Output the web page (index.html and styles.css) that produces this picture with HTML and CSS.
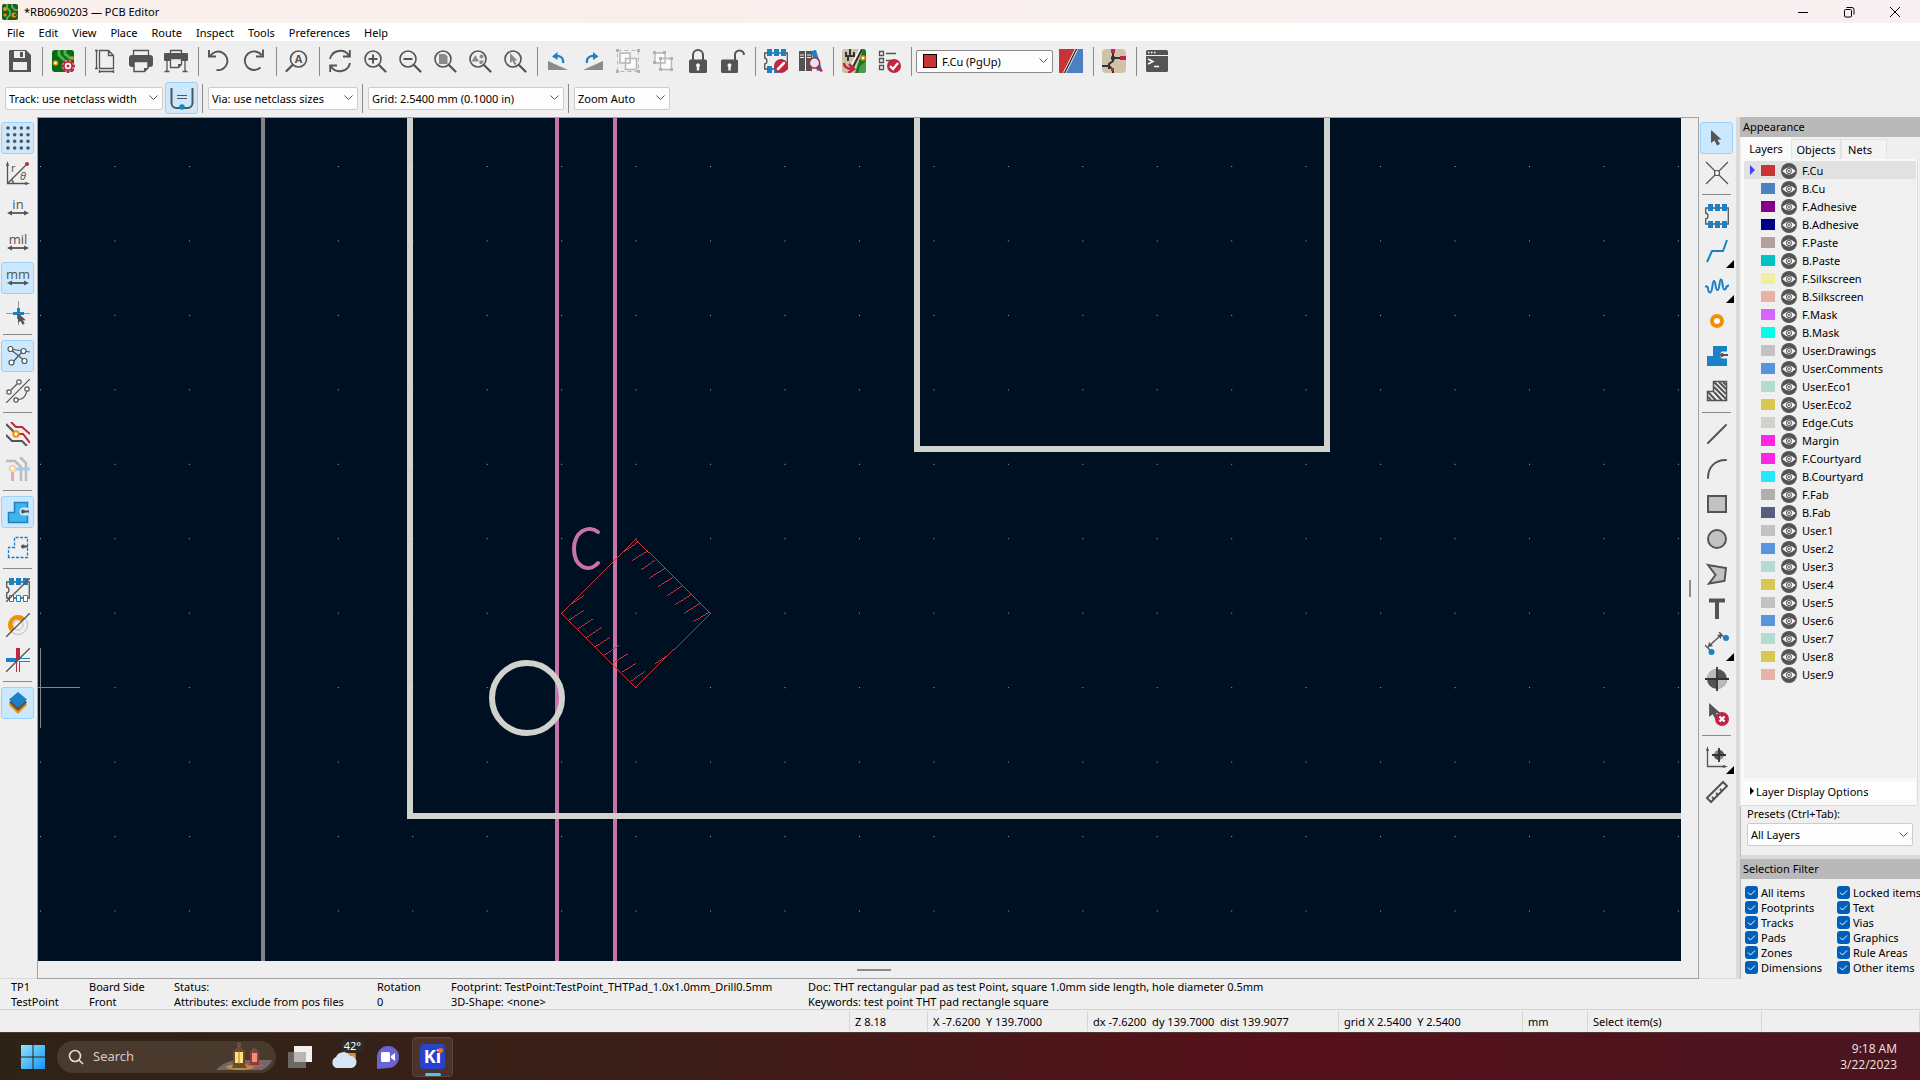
FILE: index.html
```html
<!DOCTYPE html>
<html lang="en">
<head>
<meta charset="utf-8">
<title>*RB0690203 — PCB Editor</title>
<link rel="stylesheet" href="styles.css">
</head>
<body>
<svg class="defs" aria-hidden="true">
  <symbol id="eye" viewBox="0 0 16 16"><circle cx="8" cy="8" r="8" fill="#545454"/><path d="M1.300 8Q8 .8 14.700 8Q8 15.200 1.300 8Z" fill="#f5f5f5"/><circle cx="8" cy="8" r="2.900" fill="#545454"/><circle cx="8" cy="8" r="2" fill="#f5f5f5"/><circle cx="8" cy="8" r="1" fill="#545454"/></symbol>
  <symbol id="lens" viewBox="0 0 24 24"><circle cx="10" cy="10" r="8" fill="none" stroke="#545454" stroke-width="1.600"/><path d="M16 16l6.500 6.500" stroke="#545454" stroke-width="2.200" stroke-linecap="round"/></symbol>
  <symbol id="arrow" viewBox="0 0 12 16"><path d="M0 0v13l3.500-2.500 2.500 5 3-1.500-2.500-4.500h4z" fill="#545454"/></symbol>
  <symbol id="chip" viewBox="0 0 24 24"><path d="M.7 4h22.600v16H.7v-5c3-.5 3-5.500 0-6z" fill="none" stroke="#545454" stroke-width="1.300"/></symbol>
  <symbol id="dim" viewBox="0 0 24 24"><path d="M4 20h16" stroke="#545454" stroke-width="1.800"/><path d="M1 20l5-2.500v5zM23 20l-5-2.500v5z" fill="#545454"/></symbol>
</svg>

<header class="titlebar">
  <svg class="app-icon" viewBox="0 0 16 16"><rect width="16" height="16" rx="2" fill="#1b5e20"/><path d="M5 0v4l3 3v4l-3 3v2M10 0v3l3 3h3" stroke="#4caf50" stroke-width="2" fill="none"/><circle cx="3" cy="5" r="2" fill="#f29100"/><circle cx="3" cy="11" r="1.500" fill="#f29100"/><circle cx="12" cy="11" r="2.500" fill="#f29100"/><circle cx="13" cy="11" r="1" fill="#1b3320"/></svg>
  <h1 class="title">*RB0690203 — PCB Editor</h1>
  <button class="win-btn" aria-label="Minimize"><svg viewBox="0 0 12 12"><path d="M1 6.500h10" stroke="#000"/></svg></button>
  <button class="win-btn" aria-label="Restore"><svg viewBox="0 0 12 12" fill="none" stroke="#000"><rect x="1.500" y="3.500" width="7" height="7.500" rx="1"/><path d="M3.500 1.500h5.500a2 2 0 0 1 2 2v5"/></svg></button>
  <button class="win-btn" aria-label="Close"><svg viewBox="0 0 12 12"><path d="M1 1l10 10M11 1L1 11" stroke="#000"/></svg></button>
</header>

<nav class="menubar">
  <button>File</button><button>Edit</button><button>View</button><button>Place</button><button>Route</button><button>Inspect</button><button>Tools</button><button>Preferences</button><button>Help</button>
</nav>

<div class="toolbar main-tools">
  <button class="tool" aria-label="Save"><svg viewBox="0 0 24 24"><path d="M2 1h16l5 5v17H1V2z" fill="#545454"/><path d="M6 2h11v7H6zM5 13h14v8H5z" fill="#efefef"/><path d="M12 3h3v5h-3z" fill="#545454"/></svg></button>
  <i class="sep"></i>
  <button class="tool" aria-label="Board setup"><svg viewBox="0 0 24 24"><rect x="1" y="1" width="22" height="22" rx="3" fill="#0a6b12"/><path d="M8 1v5l6 6v4M14 1v4l5 4h4" stroke="#4caf50" stroke-width="3" fill="none"/><circle cx="4.500" cy="14" r="2" fill="#fff" stroke="#f29100" stroke-width="1.500"/><circle cx="21" cy="9" r="1.600" fill="#f29100"/><circle cx="17" cy="17" r="5.500" fill="#bf2641" stroke="#fff" stroke-width=".8"/><path d="M17 10v14M10 17h14M12.200 12.200l9.600 9.600M21.800 12.200l-9.600 9.600" stroke="#bf2641" stroke-width="2.400"/><circle cx="17" cy="17" r="3.200" fill="#fff"/><circle cx="17" cy="17" r="1.500" fill="#bf2641"/></svg></button>
  <i class="sep"></i>
  <button class="tool" aria-label="Page settings"><svg viewBox="0 0 24 24" fill="none" stroke="#545454" stroke-width="1.300"><path d="M5.500 1.500h9l5 5v13h-14zM14.500 1.500v5h5M2.500 1.500v18M1 1.500h3M1 19.500h3M5.500 22.500h14M5.500 21v3M19.500 21v3"/></svg></button>
  <button class="tool" aria-label="Print"><svg viewBox="0 0 24 24"><path d="M4.500 6V1.500h15V6" fill="none" stroke="#545454" stroke-width="1.300"/><rect y="6" width="24" height="12" rx="3" fill="#545454"/><path d="M5 12.500h14V19l-3.500 3.500H5z" fill="#efefef" stroke="#545454" stroke-width="1.500"/><path d="M15 22.500V19h4z" fill="#545454"/></svg></button>
  <button class="tool" aria-label="Plot"><svg viewBox="0 0 24 24"><path d="M6.500 4V1.500h11V4M3 12v10M21 12v10M.5 22.500h5M18.500 22.500h5" fill="none" stroke="#545454" stroke-width="1.300"/><rect y="4" width="24" height="8" rx="1" fill="#545454"/><path d="M6.500 9.500h11v6l-3 3h-8z" fill="#efefef" stroke="#545454" stroke-width="1.300"/><path d="M14 18.500V15h4z" fill="#545454"/></svg></button>
  <i class="sep"></i>
  <button class="tool" aria-label="Undo"><svg viewBox="0 0 24 24" fill="none" stroke="#545454" stroke-width="1.900"><path d="M3.500 6.500A9.300 9.300 0 1 1 9.500 21M2 1v6.500h7"/></svg></button>
  <button class="tool" aria-label="Redo"><svg viewBox="0 0 24 24" fill="none" stroke="#545454" stroke-width="1.900"><path d="M19.500 6A9.300 9.300 0 1 0 18.500 18.500M21 .5v7h-7"/></svg></button>
  <i class="sep"></i>
  <button class="tool" aria-label="Find"><svg viewBox="0 0 24 24"><circle cx="13.500" cy="10" r="8" fill="none" stroke="#545454" stroke-width="1.600"/><path d="M7.500 16L1.500 22" stroke="#545454" stroke-width="2.200" stroke-linecap="round"/><text x="13.500" y="14" text-anchor="middle" class="glyph bold g11">A</text></svg></button>
  <i class="sep"></i>
  <button class="tool" aria-label="Refresh"><svg viewBox="0 0 24 24" fill="none" stroke="#545454" stroke-width="1.900"><path d="M2 10a10.500 10.500 0 0 1 19-3.500M21.800 1v6.500H15M22 14a10.500 10.500 0 0 1-19 3.500M2.200 23v-6.500H9"/></svg></button>
  <button class="tool" aria-label="Zoom in"><svg viewBox="0 0 24 24"><use href="#lens"/><path d="M10 5.500v9M5.500 10h9" stroke="#545454" stroke-width="2"/></svg></button>
  <button class="tool" aria-label="Zoom out"><svg viewBox="0 0 24 24"><use href="#lens"/><path d="M5.500 10h9" stroke="#545454" stroke-width="2"/></svg></button>
  <button class="tool" aria-label="Zoom to fit"><svg viewBox="0 0 24 24"><use href="#lens"/><path d="M6 5h6l2.500 2.500V15H6z" fill="#8b8b8b"/></svg></button>
  <button class="tool" aria-label="Zoom to objects"><svg viewBox="0 0 24 24"><use href="#lens"/><path d="M3.500 12.500L7.500 6l3.500 6.500z" fill="#8b8b8b"/><circle cx="13.500" cy="7.500" r="2" fill="#8b8b8b"/><path d="M11.500 11.500h4.500l-2 3.500h-2.500z" fill="#8b8b8b"/></svg></button>
  <button class="tool" aria-label="Zoom to selection"><svg viewBox="0 0 24 24"><use href="#lens"/><path d="M7 4v10l2.500-2 2 4 2-1-2-3.500h3z" fill="#8b8b8b"/></svg></button>
  <i class="sep"></i>
  <button class="tool" aria-label="Rotate counterclockwise"><svg viewBox="0 0 24 24"><path d="M2 12v9h20z" fill="#8b8b8b"/><path d="M17 14c1-5-3-8-8-7" fill="none" stroke="#1a81c4" stroke-width="2.200"/><path d="M6 7.500L11.500 3v8z" fill="#1a81c4"/></svg></button>
  <button class="tool" aria-label="Rotate clockwise"><svg viewBox="0 0 24 24"><path d="M22 12v9H2z" fill="#8b8b8b"/><path d="M6 14c-1-5 3-8 8-7" fill="none" stroke="#1a81c4" stroke-width="2.200"/><path d="M17.500 7.500L12 3v8z" fill="#1a81c4"/></svg></button>
  <button class="tool" aria-label="Group" disabled><svg viewBox="0 0 24 24"><rect x="1.500" y="1.500" width="21" height="21" fill="none" stroke="#b5b5b5" stroke-dasharray="4 3"/><path d="M0 0h3v3H0zM21 0h3v3h-3zM0 21h3v3H0zM21 21h3v3h-3z" fill="#b0b0b0"/><path d="M4 4h10v10H4zM9.500 9.500h11v11h-11z" fill="#fafafa" stroke="#b5b5b5" stroke-width="1.500"/></svg></button>
  <button class="tool" aria-label="Ungroup" disabled><svg viewBox="0 0 24 24"><path d="M4 4h10v10H4zM9.500 9.500h11v11h-11z" fill="#fafafa" stroke="#b5b5b5" stroke-width="1.300"/><path d="M2 2h3v3H2zM12 2h3v3h-3zM2 12h3v3H2zM8 8h3v3H8zM19 8h3v3h-3zM8 19h3v3H8zM19 19h3v3h-3z" fill="#b0b0b0"/></svg></button>
  <button class="tool" aria-label="Lock"><svg viewBox="0 0 24 24"><path d="M7 11V6a5 5 0 0 1 10 0v5" fill="none" stroke="#545454" stroke-width="2"/><rect x="3" y="10.500" width="18" height="13.500" rx="1.500" fill="#545454"/><path d="M10.800 18a2 2 0 1 1 2.400 0v3.500h-2.400z" fill="#f5f5f5"/></svg></button>
  <button class="tool" aria-label="Unlock"><svg viewBox="0 0 24 24"><path d="M14 11V6a4.500 4.500 0 0 1 9 0" fill="none" stroke="#545454" stroke-width="2"/><rect y="10.500" width="17" height="13.500" rx="1.500" fill="#545454"/><path d="M7.300 18a2 2 0 1 1 2.400 0v3.500H7.300z" fill="#f5f5f5"/></svg></button>
  <i class="sep"></i>
  <button class="tool" aria-label="Footprint editor"><svg viewBox="0 0 24 24"><use href="#chip"/><path d="M3 0h5v7H3zM10 0h5v7h-5zM17 0h5v7h-5zM3 17h5v7H3zM10 17h5v7h-5z" fill="#1a81c4"/><circle cx="17" cy="17" r="7" fill="#bf2641"/><path d="M14 20l6-6" stroke="#fff" stroke-width="2.500" stroke-linecap="round"/></svg></button>
  <button class="tool" aria-label="Footprint libraries"><svg viewBox="0 0 24 24"><path d="M0 2h6v20H0zM7 2h6v20H7z" fill="#545454"/><path d="M1 6h4M1 8.500h4M8 6h4M8 8.500h4" stroke="#efefef"/><path d="M12 2l5-1 6 20-5 1z" fill="#1a81c4"/><circle cx="15.500" cy="14" r="5.200" fill="#dde8f0" stroke="#bf2641" stroke-width="1.600"/><path d="M19 18l4 4.500" stroke="#bf2641" stroke-width="2.500"/></svg></button>
  <i class="sep"></i>
  <button class="tool" aria-label="Update from schematic"><svg viewBox="0 0 24 24"><rect width="24" height="24" rx="3" fill="#cfc2a8"/><path d="M21 0l-8 24h8a3 3 0 0 0 3-3V3a3 3 0 0 0-3-3z" fill="#0f7a1c"/><path d="M24 12l-6 5-2 7h5a3 3 0 0 0 3-3z" fill="#4c9a4c"/><path d="M8 0v8M4 3v4h8V3M6 8v4M20 0l-9 18" stroke="#333" stroke-width="2" fill="none"/><path d="M18 0l-9 17" stroke="#fff" stroke-width="1.500"/><circle cx="21" cy="9" r="2" fill="#fff" stroke="#f29100" stroke-width="1.500"/><path d="M2 14c0 5 5 6 9 6M7 15l5 5-6 4" fill="none" stroke="#bf2641" stroke-width="2.500"/></svg></button>
  <button class="tool" aria-label="Design rules check"><svg viewBox="0 0 24 24"><path d="M2.500 2.500h4v4h-4zM2.500 9.500h4v4h-4zM2.500 16.500h4v4h-4zM9 4.500h10M9 11.500h5" fill="none" stroke="#545454" stroke-width="1.300"/><circle cx="17" cy="17" r="7" fill="#bf2641"/><path d="M13 17l3 3 5-6" fill="none" stroke="#fff" stroke-width="2.200"/></svg></button>
  <i class="sep"></i>
  <div class="combo layer-combo"><i class="swatch"></i><select aria-label="Active layer"><option>F.Cu (PgUp)</option></select></div>
  <button class="tool" aria-label="Layer pair"><svg viewBox="0 0 24 24"><path d="M0 0h18L6 24H0z" fill="#c83434"/><path d="M18 0h6v24H6z" fill="#4d7fc4"/><path d="M17.500 0l-12 24" stroke="#fff" stroke-width="3"/><path d="M17.500 0l-12 24" stroke="#333" stroke-width="1.500"/></svg></button>
  <i class="sep"></i>
  <button class="tool" aria-label="Schematic editor"><svg viewBox="0 0 24 24"><rect width="24" height="24" rx="4" fill="#cfc2a8"/><path d="M11 4v8l-4 3v5M11 9h8M0 17h7M7 17l4 4v3" fill="none" stroke="#333" stroke-width="2"/><circle cx="11" cy="9" r="2.200" fill="#333"/><path d="M9 0h4v4H9zM18 7h6v4h-6zM9 19h3v3H9z" fill="#bf2641"/></svg></button>
  <i class="sep"></i>
  <button class="tool" aria-label="Scripting console"><svg viewBox="0 0 24 24"><rect x="1" y="1" width="22" height="22" rx="1.500" fill="#545454"/><path d="M1 6.500h22" stroke="#efefef"/><path d="M3 3.500h1.500M6 3.500h1.500M9 3.500h1.500" stroke="#fff" stroke-width="1.500"/><path d="M3 10l5 2.500L3 15M9 17.500h5" stroke="#fff" stroke-width="1.400" fill="none"/></svg></button>
</div>

<div class="toolbar option-tools">
  <div class="combo track-combo"><select aria-label="Track width"><option>Track: use netclass width</option></select></div>
  <button class="tool on auto-track" aria-label="Automatic track width"><svg viewBox="0 0 24 24"><path d="M1.500 2v15a5 5 0 0 0 5 5h11a5 5 0 0 0 5-5V2" fill="none" stroke="#545454" stroke-width="2"/><path d="M7 9.500h10M7 12.500h10" stroke="#545454" stroke-width="1.200"/><circle cx="12" cy="21" r="2.800" fill="#1a81c4"/></svg></button>
  <i class="sep"></i>
  <div class="combo via-combo"><select aria-label="Via size"><option>Via: use netclass sizes</option></select></div>
  <i class="sep"></i>
  <div class="combo grid-combo"><select aria-label="Grid"><option>Grid: 2.5400 mm (0.1000 in)</option></select></div>
  <i class="sep"></i>
  <div class="combo zoom-combo"><select aria-label="Zoom"><option>Zoom Auto</option></select></div>
</div>

<main class="workspace">
  <div class="side-tools">
    <button class="tool on" aria-label="Show grid"><svg viewBox="0 0 24 24"><path d="M2 2h20.500M2 8.700h20.500M2 15.300h20.500M2 22h20.500" stroke="#545454" stroke-width="3.600" stroke-linecap="round" stroke-dasharray="0 6.660"/></svg></button>
    <button class="tool" aria-label="Polar coordinates"><svg viewBox="0 0 24 24"><path d="M1.500 2v20.500H22M1.500 22.500L21 3M5 18a8 8 0 0 1 2.500 4" fill="none" stroke="#545454" stroke-width="1.300"/><path d="M1.500 0L0 5h3zM24 22.500L19 21v3z" fill="#545454"/><circle cx="21" cy="3" r="2" fill="#bf2641"/><text x="5" y="11" class="glyph g11">r</text><text x="14" y="19" class="glyph g11 italic">θ</text></svg></button>
    <button class="tool" aria-label="Inches"><svg viewBox="0 0 24 24"><text x="12" y="13" text-anchor="middle" class="glyph">in</text><use href="#dim" y="-3"/></svg></button>
    <button class="tool" aria-label="Mils"><svg viewBox="0 0 24 24"><text x="12" y="13" text-anchor="middle" class="glyph">mil</text><use href="#dim" y="-3"/></svg></button>
    <button class="tool on" aria-label="Millimeters"><svg viewBox="0 0 24 24"><text x="12" y="13" text-anchor="middle" class="glyph">mm</text><use href="#dim" y="-3"/></svg></button>
    <button class="tool" aria-label="Full crosshair"><svg viewBox="0 0 24 24"><path d="M12.500 0v24M0 12.500h24" stroke="#999"/><path d="M12.500 7v11M7 12.500h11" stroke="#1a81c4" stroke-width="3"/><use href="#arrow" x="12" y="12" width="9" height="12"/></svg></button>
    <i class="sep"></i>
    <button class="tool on" aria-label="Ratsnest"><svg viewBox="0 0 24 24" stroke="#545454" stroke-width="1.200"><path d="M4 5l15 12M4 5l20 3M17 7L6 19"/><g fill="#fff"><circle cx="4.500" cy="5" r="2.500"/><circle cx="17.500" cy="7" r="2.500"/><circle cx="5.500" cy="18.500" r="2.500"/><circle cx="18.500" cy="17" r="2.500"/></g></svg></button>
    <button class="tool" aria-label="Curved ratsnest"><svg viewBox="0 0 24 24" stroke="#545454" stroke-width="1.200" fill="none"><path d="M0 24L24 0M5 11l6-6M12 20.500c6 0 8-4 9-9"/><g fill="#fff"><circle cx="3" cy="13" r="2.200"/><circle cx="13" cy="3" r="2.200"/><circle cx="21" cy="10" r="2.200"/><circle cx="10" cy="21" r="2.200"/></g></svg></button>
    <i class="sep"></i>
    <button class="tool" aria-label="Inactive layers"><svg viewBox="0 0 24 24" fill="none" stroke-width="2"><path d="M0 2l10 10M0 13l6 6h10l5 5" stroke="#545454"/><path d="M5 0l5 5h6l8 7M10 12h7l7 9" stroke="#bf2641"/><circle cx="10" cy="12" r="2.700" fill="#fff" stroke="#f29100"/></svg></button>
    <button class="tool" aria-label="Net highlight"><svg viewBox="0 0 24 24" fill="none" stroke-width="2.500"><path d="M0 4h9l6 6v14M14 0l6 6v18" stroke="#bbb"/><path d="M7 12h17" stroke="#a3cde8" stroke-width="3"/><path d="M6.500 12v12" stroke="#e8a8b3" stroke-width="3"/><circle cx="6.500" cy="11.500" r="2.700" fill="#fff" stroke="#fad39a" stroke-width="2"/></svg></button>
    <i class="sep"></i>
    <button class="tool on" aria-label="Filled zones"><svg viewBox="0 0 24 24"><path d="M2.500 22.500v-10h6v-10h13v20z" fill="#3eb5ea" stroke="#1a81c4" stroke-width="1.500"/><path d="M22.500 7.500h-5a4 4 0 0 0 0 8h5z" fill="#cce8ff"/><path d="M17 11.500h6" stroke="#545454" stroke-width="2"/><circle cx="17" cy="11.500" r="2" fill="#545454"/></svg></button>
    <button class="tool" aria-label="Zone outlines"><svg viewBox="0 0 24 24"><path d="M2.500 22.500v-10h6v-10h13v20z" fill="none" stroke="#1a81c4" stroke-width="1.300" stroke-dasharray="3 1.500"/><path d="M17 11.500h5" stroke="#545454" stroke-width="2"/><circle cx="17" cy="11.500" r="2" fill="#545454"/></svg></button>
    <i class="sep"></i>
    <button class="tool" aria-label="Sketch pads"><svg viewBox="0 0 24 24"><use href="#chip"/><path d="M3 0h5v7H3zM10 0h5v7h-5zM17 0h5v7h-5z" fill="#1a81c4"/><path d="M3.500 17.500h4v6h-4zM10.500 17.500h4v6h-4zM17.500 17.500h4v6h-4z" fill="#fff" stroke="#1a81c4"/><path d="M0 24L24 0" stroke="#545454" stroke-width="1.300"/></svg></button>
    <button class="tool" aria-label="Sketch vias"><svg viewBox="0 0 24 24" fill="none"><circle cx="12" cy="12" r="9.500" stroke="#bbb"/><circle cx="12" cy="12" r="5" stroke="#bbb"/><path d="M5 19A9.900 9.900 0 1 1 19 5l-4 4a4.500 4.500 0 1 0-6 6z" fill="#f29100"/><path d="M0 24L24 0" stroke="#545454" stroke-width="1.300"/></svg></button>
    <button class="tool" aria-label="Sketch tracks"><svg viewBox="0 0 24 24" fill="none"><path d="M0 12h12" stroke="#1a81c4" stroke-width="4"/><path d="M13 10.500h11M13 13.500h11" stroke="#1a81c4"/><path d="M12 0v12" stroke="#bf2641" stroke-width="4"/><path d="M10.500 13v11M13.500 13v11" stroke="#bf2641"/><path d="M0 24L24 0" stroke="#545454" stroke-width="1.300"/></svg></button>
    <i class="sep"></i>
    <button class="tool on" aria-label="Appearance manager"><svg viewBox="0 0 24 24"><path d="M3 14l9-9 9 9-9 9z" fill="#f29100"/><path d="M3 11.500l9-9 9 9-9 8.500z" fill="#545454"/><path d="M3 8.500L12 1l9 7.500-9 8z" fill="#1a81c4"/></svg></button>
  </div>

  <div class="view">
    <svg class="board" role="img" aria-label="Board canvas">
      <defs><pattern id="dots" x="2" y="48" width="74.450" height="74.450" patternUnits="userSpaceOnUse"><rect width="1" height="1" fill="#a9aeb3"/></pattern></defs>
      <rect width="100%" height="100%" fill="#001023"/>
      <rect width="100%" height="100%" fill="url(#dots)"/>
      <path d="M225 0v2000" stroke="#848484" stroke-width="4"/>
      <path d="M519 0v2000M577 0v2000" stroke="#c872a9" stroke-width="4"/>
      <path class="thin" d="M2.500 530v80M0 569.500h42" stroke="#848484"/>
      <g fill="none" stroke="#d0d2cd" stroke-width="6">
        <path d="M372 0v701"/><line x1="369" y1="698" x2="100%" y2="698"/>
        <path d="M879 0v331h410V0"/>
        <circle cx="489" cy="580" r="35"/>
      </g>
      <path d="M560 414c-10-8-24 0-24 17s14 25 24 14" fill="none" stroke="#c872a9" stroke-width="4" stroke-linecap="round"/>
      <g class="thin" transform="translate(342 382) scale(.333333)" fill="none" stroke="#c83434" stroke-width="3">
        <path d="M767 118L992 340 767 562 544 340z"/>
        <path d="M730 156l44-30M757 182l46-30M784 209l42-29M808 235l46-30M835 260l46-30M862 287l46-31M886 314l48-31M913 340l48-31M940 365l46-27M568 316l44-30M565 362l46-31M592 388l46-31M619 413l46-31M645 441l46-30M672 466l46-30M699 489l44-27M725 517l43-27M752 544l43-30M826 491l42-28"/>
      </g>
    </svg>
    <div class="vscroll"><i></i></div>
    <div class="hscroll"><i></i></div>
  </div>

  <div class="side-tools">
    <button class="tool on" aria-label="Select"><svg viewBox="0 0 24 24"><use href="#arrow" x="6" y="4" width="12" height="16"/></svg></button>
    <button class="tool" aria-label="Local ratsnest"><svg viewBox="0 0 24 24" stroke="#545454" stroke-width="1.200"><path d="M1 1l22 22M23 1L1 23"/><circle cx="12" cy="12" r="2.500" fill="#fff"/></svg></button>
    <i class="sep"></i>
    <button class="tool" aria-label="Add footprint"><svg viewBox="0 0 24 24"><use href="#chip"/><path d="M3 0h5v7H3zM10 0h5v7h-5zM17 0h5v7h-5zM3 17h5v7H3zM10 17h5v7h-5zM17 17h5v7h-5z" fill="#1a81c4"/></svg></button>
    <button class="tool more" aria-label="Route tracks"><svg viewBox="0 0 24 24"><path d="M2 23l5-11h11l4-11" fill="none" stroke="#1a81c4" stroke-width="2"/></svg></button>
    <button class="tool more" aria-label="Tune length"><svg viewBox="0 0 24 24"><path d="M0 12.500h2c2 0 0 6 3 6s2-11.500 4-11.500 1 9 3.500 9S14 5.500 16 5.500s1 10 3.500 10 .5-4 4.500-4" fill="none" stroke="#1a81c4" stroke-width="2"/></svg></button>
    <button class="tool" aria-label="Add via"><svg viewBox="0 0 24 24"><circle cx="12" cy="12" r="5" fill="#fff" stroke="#f29100" stroke-width="4"/></svg></button>
    <button class="tool" aria-label="Add filled zone"><svg viewBox="0 0 24 24"><path d="M2 22V12h6V2h14v20z" fill="#1a81c4"/><path d="M22 7.500h-5a4 4 0 0 0 0 7h5z" fill="#efefef"/><path d="M17 11h6" stroke="#545454" stroke-width="2"/><circle cx="17" cy="11" r="2" fill="#545454"/></svg></button>
    <button class="tool" aria-label="Add rule area"><svg viewBox="0 0 24 24" fill="none" stroke="#545454"><path d="M2.500 21.500v-9h6v-10h13v19z" stroke-width="1.500"/><path d="M9 3l12 12M9 8l12.500 12.500M14 3l7.500 7.500M3 13l8 8.500M9 13l8 8.500M3 18l3 3M18 3l3 3" stroke-width="2"/></svg></button>
    <i class="sep"></i>
    <button class="tool" aria-label="Draw line"><svg viewBox="0 0 24 24"><path d="M3 21L21 3" stroke="#545454" stroke-width="2" stroke-linecap="round"/></svg></button>
    <button class="tool" aria-label="Draw arc"><svg viewBox="0 0 24 24"><path d="M3 21C3 10 10 3 21 3" fill="none" stroke="#545454" stroke-width="2" stroke-linecap="round"/></svg></button>
    <button class="tool" aria-label="Draw rectangle"><svg viewBox="0 0 24 24"><rect x="3" y="4" width="18" height="16" fill="#c2c2c2" stroke="#545454" stroke-width="2"/></svg></button>
    <button class="tool" aria-label="Draw circle"><svg viewBox="0 0 24 24"><circle cx="12" cy="12" r="9" fill="#c2c2c2" stroke="#545454" stroke-width="2"/></svg></button>
    <button class="tool" aria-label="Draw polygon"><svg viewBox="0 0 24 24"><path d="M3 3l18 3-1.500 13L4 21.500 10.500 13z" fill="#c2c2c2" stroke="#545454" stroke-width="2"/></svg></button>
    <button class="tool" aria-label="Add text"><svg viewBox="0 0 24 24"><path d="M4 3.500h16M12 3v19" stroke="#545454" stroke-width="4"/></svg></button>
    <button class="tool more" aria-label="Add dimension"><svg viewBox="0 0 24 24"><path d="M0 13l6 6M14 0l6 6M3 15L17 2" stroke="#545454" stroke-width="1.300"/><path d="M3 15l1-5 4 4zM17 2l-5 1 4 4z" fill="#545454"/><circle cx="6.500" cy="20" r="3" fill="#1a81c4"/><circle cx="21" cy="6" r="3" fill="#1a81c4"/></svg></button>
    <button class="tool" aria-label="Set origin"><svg viewBox="0 0 24 24"><circle cx="12" cy="12" r="10" fill="#545454"/><path d="M12 2A10 10 0 0 0 2 12h10zM12 22a10 10 0 0 0 10-10H12z" fill="#bbb"/><path d="M12 0v24M0 12h24" stroke="#333" stroke-width="1.800"/></svg></button>
    <button class="tool" aria-label="Delete"><svg viewBox="0 0 24 24"><use href="#arrow" x="4" y="1" width="13" height="17"/><circle cx="17" cy="17" r="7" fill="#bf2641"/><path d="M14.500 14.500l5 5M19.500 14.500l-5 5" stroke="#fff" stroke-width="2.300"/></svg></button>
    <i class="sep"></i>
    <button class="tool more" aria-label="Grid origin"><svg viewBox="0 0 24 24"><path d="M2.500 4v17.500H20" fill="none" stroke="#545454" stroke-width="1.300"/><path d="M2.500 1L1 6h3zM23 21.500L18 20v3z" fill="#545454"/><circle cx="14" cy="10" r="5" fill="#8b8b8b"/><path d="M14 5a5 5 0 0 1 5 5h-5zM14 15a5 5 0 0 1-5-5h5z" fill="#545454"/><path d="M14 3v14M7 10h14" stroke="#333" stroke-width="1.800"/></svg></button>
    <button class="tool" aria-label="Measure"><svg viewBox="0 0 24 24"><path d="M2 18L18 2l4 4L6 22z" fill="none" stroke="#545454" stroke-width="2"/><path d="M9 19l-2-2M13 15l-2-2M17 11l-2-2" stroke="#545454" stroke-width="1.800"/></svg></button>
  </div>

  <aside class="panel">
    <h2 class="panel-head">Appearance</h2>
    <div class="tabs" role="tablist"><button role="tab" class="tab active">Layers</button><button role="tab" class="tab">Objects</button><button role="tab" class="tab">Nets</button></div>
    <div class="page">
      <ul class="layers">
        <li class="current"><i style="background:#c83434"></i><svg><use href="#eye"/></svg><span>F.Cu</span></li>
        <li><i style="background:#4d7fc4"></i><svg><use href="#eye"/></svg><span>B.Cu</span></li>
        <li><i style="background:#840084"></i><svg><use href="#eye"/></svg><span>F.Adhesive</span></li>
        <li><i style="background:#000084"></i><svg><use href="#eye"/></svg><span>B.Adhesive</span></li>
        <li><i style="background:#b4a09a"></i><svg><use href="#eye"/></svg><span>F.Paste</span></li>
        <li><i style="background:#00c2c2"></i><svg><use href="#eye"/></svg><span>B.Paste</span></li>
        <li><i style="background:#f2eda1"></i><svg><use href="#eye"/></svg><span>F.Silkscreen</span></li>
        <li><i style="background:#e8b2a7"></i><svg><use href="#eye"/></svg><span>B.Silkscreen</span></li>
        <li><i style="background:#d864ff"></i><svg><use href="#eye"/></svg><span>F.Mask</span></li>
        <li><i style="background:#02ffee"></i><svg><use href="#eye"/></svg><span>B.Mask</span></li>
        <li><i style="background:#c2c2c2"></i><svg><use href="#eye"/></svg><span>User.Drawings</span></li>
        <li><i style="background:#5994dc"></i><svg><use href="#eye"/></svg><span>User.Comments</span></li>
        <li><i style="background:#b4dbd2"></i><svg><use href="#eye"/></svg><span>User.Eco1</span></li>
        <li><i style="background:#d8c852"></i><svg><use href="#eye"/></svg><span>User.Eco2</span></li>
        <li><i style="background:#d0d2cd"></i><svg><use href="#eye"/></svg><span>Edge.Cuts</span></li>
        <li><i style="background:#ff26e2"></i><svg><use href="#eye"/></svg><span>Margin</span></li>
        <li><i style="background:#ff26e2"></i><svg><use href="#eye"/></svg><span>F.Courtyard</span></li>
        <li><i style="background:#26e9ff"></i><svg><use href="#eye"/></svg><span>B.Courtyard</span></li>
        <li><i style="background:#afafaf"></i><svg><use href="#eye"/></svg><span>F.Fab</span></li>
        <li><i style="background:#585d84"></i><svg><use href="#eye"/></svg><span>B.Fab</span></li>
        <li><i style="background:#c2c2c2"></i><svg><use href="#eye"/></svg><span>User.1</span></li>
        <li><i style="background:#5994dc"></i><svg><use href="#eye"/></svg><span>User.2</span></li>
        <li><i style="background:#b4dbd2"></i><svg><use href="#eye"/></svg><span>User.3</span></li>
        <li><i style="background:#d8c852"></i><svg><use href="#eye"/></svg><span>User.4</span></li>
        <li><i style="background:#c2c2c2"></i><svg><use href="#eye"/></svg><span>User.5</span></li>
        <li><i style="background:#5994dc"></i><svg><use href="#eye"/></svg><span>User.6</span></li>
        <li><i style="background:#b4dbd2"></i><svg><use href="#eye"/></svg><span>User.7</span></li>
        <li><i style="background:#d8c852"></i><svg><use href="#eye"/></svg><span>User.8</span></li>
        <li><i style="background:#e8b2a7"></i><svg><use href="#eye"/></svg><span>User.9</span></li>
      </ul>
      <button class="expander">Layer Display Options</button>
    </div>
    <div class="presets">
      <label for="preset">Presets (Ctrl+Tab):</label>
      <div class="combo"><select id="preset"><option>All Layers</option></select></div>
    </div>
    <h2 class="panel-head">Selection Filter</h2>
    <div class="filters">
      <label><input type="checkbox" checked>All items</label><label><input type="checkbox" checked>Locked items</label>
      <label><input type="checkbox" checked>Footprints</label><label><input type="checkbox" checked>Text</label>
      <label><input type="checkbox" checked>Tracks</label><label><input type="checkbox" checked>Vias</label>
      <label><input type="checkbox" checked>Pads</label><label><input type="checkbox" checked>Graphics</label>
      <label><input type="checkbox" checked>Zones</label><label><input type="checkbox" checked>Rule Areas</label>
      <label><input type="checkbox" checked>Dimensions</label><label><input type="checkbox" checked>Other items</label>
    </div>
  </aside>
</main>

<section class="info">
  <div>TP1<br>TestPoint</div><div>Board Side<br>Front</div><div>Status:<br>Attributes: exclude from pos files</div><div>Rotation<br>0</div><div>Footprint: TestPoint:TestPoint_THTPad_1.0x1.0mm_Drill0.5mm<br>3D-Shape: &lt;none&gt;</div><div>Doc: THT rectangular pad as test Point, square 1.0mm side length, hole diameter 0.5mm<br>Keywords: test point THT pad rectangle square</div>
</section>

<footer class="status">
  <span></span><span>Z 8.18</span><span>X -7.6200&nbsp; Y 139.7000</span><span>dx -7.6200&nbsp; dy 139.7000&nbsp; dist 139.9077</span><span>grid X 2.5400&nbsp; Y 2.5400</span><span>mm</span><span>Select item(s)</span><span></span>
</footer>

<div class="taskbar">
  <button class="task start" aria-label="Start"><svg viewBox="0 0 24 24"><defs><linearGradient id="win" x1="0" y1="0" x2="24" y2="24" gradientUnits="userSpaceOnUse"><stop stop-color="#8fe4ff"/><stop offset="1" stop-color="#1594f5"/></linearGradient></defs><path d="M0 0h11.500v11.500H0zM12.500 0H24v11.500H12.500zM0 12.500h11.500V24H0zM12.500 12.500H24V24H12.500z" fill="url(#win)"/></svg></button>
  <div class="search">
    <svg viewBox="0 0 16 16" fill="none" stroke="#e4ddd8" stroke-width="1.600"><circle cx="7" cy="7" r="5.500"/><path d="M11 11l4 4"/></svg>
    <input type="search" aria-label="Search" placeholder="Search">
    <svg class="lanterns" viewBox="0 0 56 30"><path d="M0 28c8-8 16-10 24-10h32c-2 5-6 8-10 10z" fill="#75656c"/><ellipse cx="24" cy="25" rx="14" ry="3" fill="#d8a23a" opacity=".7"/><ellipse cx="38" cy="23" rx="9" ry="2" fill="#d85a4a" opacity=".7"/><path d="M17 9l6-6 6 6v14l2 3H16l1-3z" fill="#6b4a35"/><path d="M19 10h8v11h-8z" fill="#ffe27a"/><path d="M23 9v13" stroke="#b07a30"/><circle cx="23" cy="2.500" r="1.500" fill="none" stroke="#8a6a50"/><path d="M34 10l4-5 5 5v11l1 2H33l1-2z" fill="#7a463b"/><path d="M36 11h5v9h-5z" fill="#ff8a7a"/></svg>
  </div>
  <button class="task" aria-label="Task view"><svg viewBox="0 0 24 24"><rect x="6" y="1" width="18" height="16" fill="#f3f1ef"/><rect y="7" width="18" height="16" fill="#6e6862"/><rect x="6" y="7" width="12" height="10" fill="#b9b5b1"/></svg></button>
  <button class="task weather" aria-label="Weather"><svg viewBox="0 0 28 28"><circle cx="19" cy="13" r="7" fill="#e88a2a"/><path d="M6 25a6 6 0 0 1 0-11 8 8 0 0 1 14-1 6 6 0 0 1 1 12z" fill="#d6e6f8"/></svg><span class="badge">42°</span></button>
  <button class="task" aria-label="Chat"><svg viewBox="0 0 24 24"><path d="M1 24V12a11 11 0 1 1 11 11z" fill="#6a63d2"/><rect x="5" y="7" width="9" height="10" rx="1.500" fill="#fff"/><path d="M15 11l4-3v8l-4-3z" fill="#fff"/></svg></button>
  <button class="task running" aria-label="KiCad"><span class="ki">Ki</span></button>
  <div class="clock">9:18 AM<br>3/22/2023</div>
</div>
</body>
</html>
```
FILE: styles.css
```css
* { box-sizing: border-box; }
html, body { height: 100%; }
body {
  margin: 0;
  min-height: 100vh;
  display: flex;
  flex-direction: column;
  overflow: hidden;
  background: #efefef;
  color: #000;
  font: 11px/15px "Noto Sans", "Open Sans", sans-serif;
}
button, select, input { font: inherit; color: inherit; }
button { border: 0; padding: 0; background: none; }
h1, h2 { margin: 0; font-size: inherit; font-weight: normal; }
svg { display: block; flex: none; }
.defs { position: absolute; width: 0; height: 0; }

.titlebar { display: flex; align-items: center; height: 23px; padding: 0 2px; background: linear-gradient(90deg, #f9f0eb, #f8eff2); }
.app-icon { width: 16px; height: 16px; }
.title { flex: 1; padding-left: 6px; }
.win-btn { width: 46px; height: 22px; display: grid; place-items: center; }
.win-btn svg { width: 12px; height: 12px; }

.menubar { display: flex; gap: 14px; height: 18px; padding: 0 7px; background: #fff; }

.toolbar { display: flex; align-items: center; }
.main-tools { height: 40px; padding-left: 2px; }
.option-tools { height: 36px; padding: 0 0 2px 5px; }
.tool { position: relative; flex: none; display: grid; place-items: center; width: 35px; height: 35px; border-radius: 4px; }
.tool svg { width: 24px; height: 24px; }
.tool.on { width: 33px; height: 32px; background: #cce8ff; border: 1px solid #99d1ff; border-radius: 3px; }
.sep { flex: none; width: 1px; height: 29px; margin: 0 2px 0 5px; background: #8a8a8a; }
.glyph { font: 13px "Open Sans", sans-serif; fill: #545454; stroke: none; }
.glyph.bold { font-weight: bold; }
.glyph.italic { font-style: italic; }
.glyph.g11 { font-size: 11px; }

.combo { position: relative; display: flex; align-items: center; height: 23px; background: #fdfdfd; border: 1px solid #ccc; border-radius: 2px; }
.combo select {
  flex: 1; min-width: 0; height: 21px; padding: 0 20px 0 3px; border: 0; appearance: none;
  background: url("data:image/svg+xml,%3Csvg xmlns='http://www.w3.org/2000/svg' width='9' height='6'%3E%3Cpath d='M.5.5l4 4 4-4' fill='none' stroke='%23555'/%3E%3C/svg%3E") no-repeat right 4px center;
}
.layer-combo { width: 137px; margin-left: 2px; border-color: #8a8a8a; }
.swatch { width: 14px; height: 14px; margin: 0 2px 0 6px; background: #c83434; border: 1px solid #000; }
.track-combo { width: 158px; }
.toolbar .auto-track { margin: 0 0 0 2px; }
.auto-track + .sep { margin-left: 4px; }
.via-combo { width: 150px; margin: 0 -1px 0 3px; }
.grid-combo { width: 196px; margin: 0 -1px 0 3px; }
.zoom-combo { width: 96px; margin-left: 3px; }

.workspace { flex: 1; min-height: 0; display: grid; grid-template-columns: 37px minmax(0, 1fr) 37px 184px; }
.side-tools { display: flex; flex-direction: column; align-items: center; padding: 3px 2px 0 0; border-bottom: 1px solid #d8d8d8; }
.side-tools .tool.on { margin: 2px 0 1px; }
.side-tools .sep { width: 29px; height: 1px; margin: 4px 0 3px; }
.more::after { content: ""; position: absolute; right: 0; bottom: 0; border: 4px solid; border-color: transparent #000 #000 transparent; }

.view { display: grid; grid-template: minmax(0, 1fr) 17px / minmax(0, 1fr) 17px; border: 1px solid #a0a0a0; }
.board { width: 100%; height: 100%; }
.thin { shape-rendering: crispEdges; }
.vscroll, .hscroll { display: grid; place-items: center; }
.vscroll { padding-top: 98px; }
.vscroll i { width: 2px; height: 17px; background: #8a8a8a; }
.hscroll { padding-left: 28px; }
.hscroll i { width: 34px; height: 2px; background: #8a8a8a; }

.panel { display: flex; flex-direction: column; border-left: 4px solid #dadada; overflow: hidden; white-space: nowrap; }
.panel-head { flex: none; height: 20px; padding: 2px 3px; background: #b9b9b9; }
.tabs { display: flex; align-items: flex-end; height: 22px; padding-left: 1px; }
.tab { height: 20px; width: 50px; background: #f3f3f3; border: 1px solid #e2e2e2; border-bottom: 0; }
.tab:last-child { width: 46px; padding-right: 8px; }
.tab.active { height: 22px; background: #fafafa; border-color: #fafafa; }
.page { flex: 1; display: flex; flex-direction: column; gap: 4px; margin: 0 2px 0 1px; padding: 2px 1px 5px 3px; background: #f9f9f9; border-right: 1px solid #ddd; border-bottom: 1px solid #ddd; }
.layers { flex: 1; margin: 0; padding: 0; list-style: none; background: #f0f0f0; }
.layers li { position: relative; display: flex; align-items: center; height: 18px; padding: 0 0 0 17px; }
.layers li i { width: 14px; height: 11px; margin-right: 6px; }
.layers li svg { width: 16px; height: 16px; margin: 2px 5px 0 0; }
.layers li span { padding-top: 1px; }
.layers .current { background: #e1e1e1; }
.layers .current::before { content: ""; position: absolute; left: 6px; top: 4px; border: solid transparent; border-width: 5px 0 5px 5px; border-left-color: #4040ff; }
.expander { display: flex; align-items: center; height: 18px; padding-left: 6px; background: #fff; }
.expander::before { content: ""; margin-right: 2px; border: solid transparent; border-width: 4px 0 4px 4px; border-left-color: #000; }
.presets { height: 53px; flex: none; padding: 0 7px 0 6px; border-left: 1px solid #bbb; border-bottom: 4px solid #dadada; }
.presets label { display: block; }
.presets .combo { margin-top: 2px; }
.filters { flex: none; height: 100px; display: grid; grid-template-columns: 92px auto; align-content: start; padding: 6px 0 0 4px; border-left: 1px solid #bbb; }
.filters label { display: flex; align-items: center; height: 15px; gap: 3px; }
.filters input {
  flex: none; appearance: none; width: 13px; height: 13px; margin: 0; border-radius: 3px;
  background: #005fb8 url("data:image/svg+xml,%3Csvg xmlns='http://www.w3.org/2000/svg' width='13' height='13'%3E%3Cpath d='M3 6.500l2.500 2.500L10 4.500' fill='none' stroke='%23fff'/%3E%3C/svg%3E") center;
}

.info { display: grid; grid-template-columns: 78px 85px 203px 74px 357px 1fr; height: 31px; padding-left: 11px; border-bottom: 1px solid #d5d5d5; white-space: nowrap; }
.status { display: grid; grid-template-columns: 850px 78px 160px 251px 184px 65px 174px 1fr; height: 22px; padding: 1px 0; white-space: nowrap; }
.status span { padding: 3px 5px 2px; border-right: 1px solid #d5d5d5; }

.taskbar { display: flex; align-items: center; height: 48px; padding: 0 23px 0 15px; color: #fff; background: linear-gradient(90deg, #2d2416, #3b1f18 33%, #55101a 66%, #4a1520); border-top: 1px solid #4f3a33; }
.task { flex: none; position: relative; width: 44px; height: 40px; display: grid; place-items: center; }
.task svg { width: 24px; height: 24px; }
.start { width: 35px; margin-right: 7px; }
.search { display: flex; align-items: center; width: 219px; height: 32px; margin-right: 2px; padding: 0 4px 0 11px; border-radius: 16px; background: #4a3a2e; }
.search svg { width: 16px; height: 16px; }
.search input { flex: 1; min-width: 0; margin-left: 9px; padding: 0; border: 0; background: none; font-size: 13px; }
.search input::placeholder { color: #d4ccc6; opacity: 1; }
.search .lanterns { width: 56px; height: 30px; }
.weather svg { width: 28px; height: 28px; }
.badge { position: absolute; right: 2px; top: 1px; padding: 0 3px; border-radius: 8px; background: #2c2c2e; }
.running { width: 41px; margin-left: 2px; border-radius: 4px; background: #4c3228; border: 1px solid #5c443a; }
.running::after { content: ""; position: absolute; bottom: 0; left: 12px; width: 16px; height: 3px; border-radius: 2px; background: #4cc2ff; }
.ki { position: relative; width: 25px; height: 25px; border-radius: 4px; background: #2743c9; font: bold 18px/25px "Noto Sans", sans-serif; }
.ki::after { content: ""; position: absolute; right: 2px; top: 4px; width: 5px; height: 5px; border-radius: 50%; background: #ff6a13; }
.clock { margin-left: auto; text-align: right; font: 12px/16px "Open Sans", sans-serif; color: #f0e4e4; }
```
